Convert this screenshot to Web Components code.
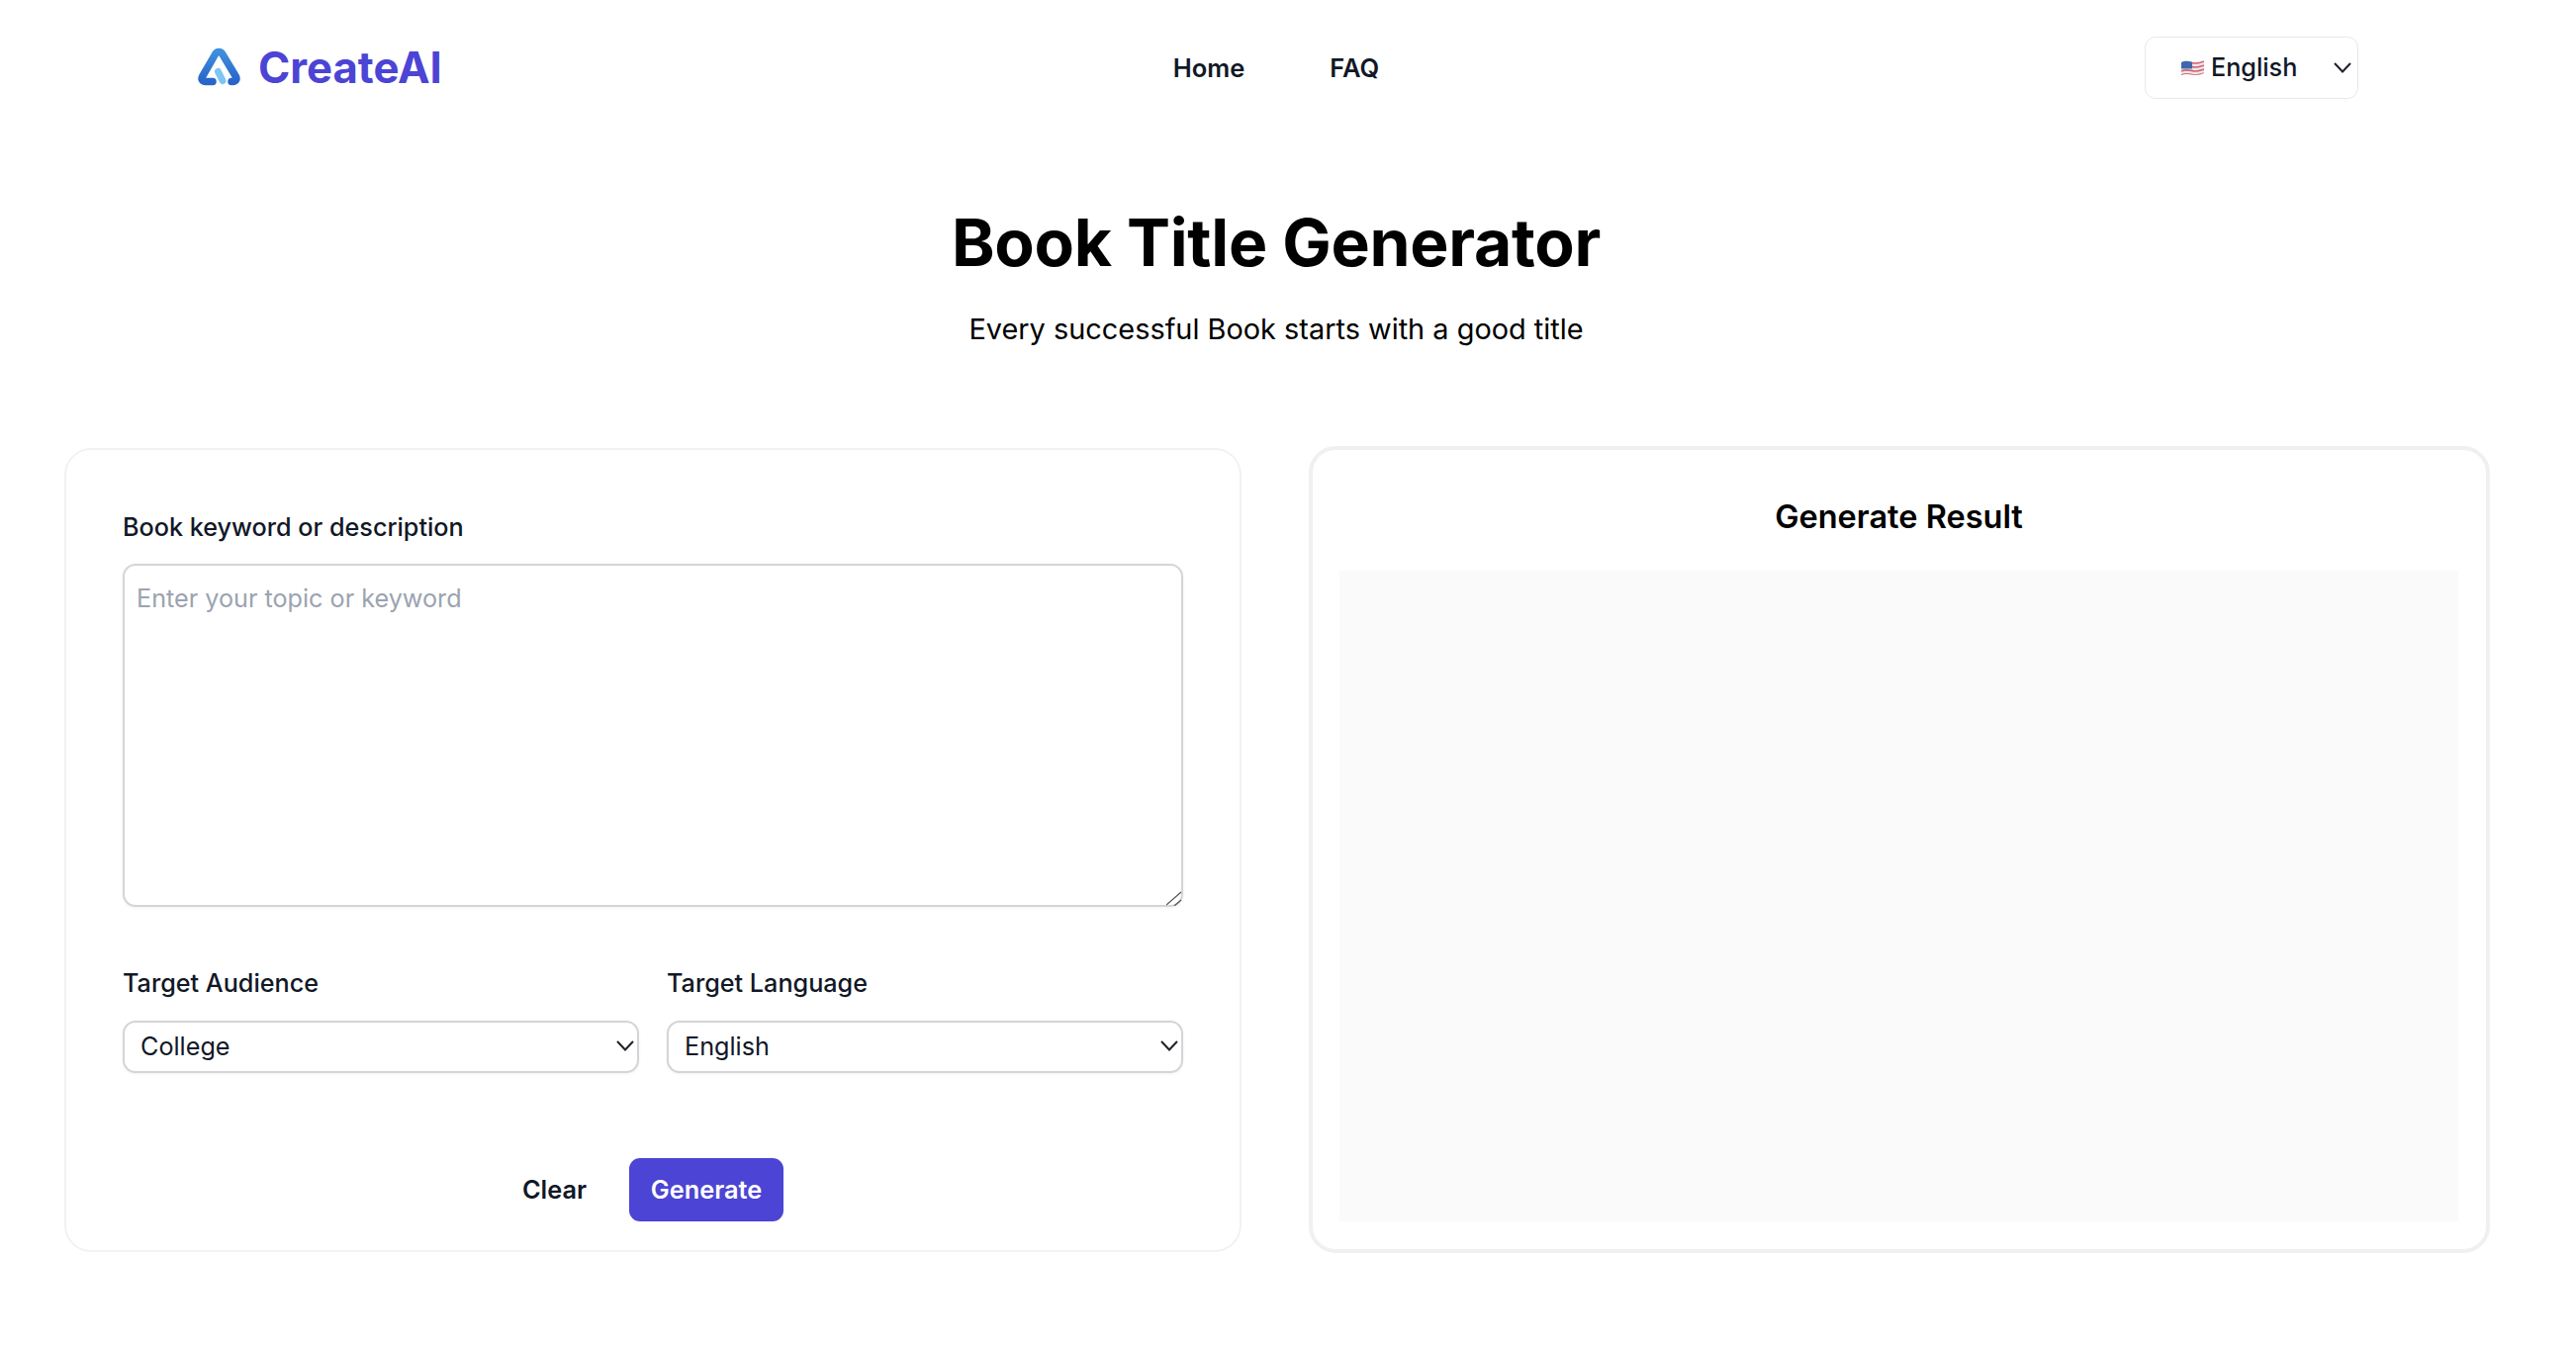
<!DOCTYPE html>
<html>
<head>
<meta charset="utf-8">
<title>Book Title Generator</title>
<style>
  html, body { margin: 0; padding: 0; background: #fff; }
  body { font-family: Inter, "Liberation Sans", sans-serif; color: #000; }
</style>
</head>
<body>
  <app-page>
    <site-header></site-header>
    <page-hero heading="Book Title Generator" sub="Every successful Book starts with a good title"></page-hero>
    <div slot="cards">
      <generator-form></generator-form>
      <result-panel></result-panel>
    </div>
  </app-page>

  <template id="tplHeader">
    <style>
      :host { display: flex; align-items: center; justify-content: space-between; height: 136px; padding: 0 220px 0 200px; box-sizing: border-box; }
      .logo { display: flex; align-items: center; gap: 18px; font-size: 43.7px; font-weight: 700; color: #4c44d4; width: 441px; }
      .logo svg { width: 43px; height: 40px; display: block; }
      nav { display: flex; gap: 86px; font-size: 25.5px; font-weight: 600; color: #111827; }
      .lang { position: relative; width: 216px; height: 63px; box-sizing: border-box; margin-left: 229px; border: 1px solid #e8e8ea; border-radius: 11px; display: flex; align-items: center; padding-left: 36px; gap: 7px; font-size: 25.2px; font-weight: 500; color: #111827; }
      .lang .flag { width: 23px; height: 17px; display: block; }
      .lang .chev { position: absolute; right: 3px; top: 23px; width: 24px; height: 16px; }
    </style>
    <a class="logo">
      <svg viewBox="0 0 43 40">
        <defs>
          <linearGradient id="lg" x1="0" y1="0" x2="0" y2="1">
            <stop offset="0" stop-color="#3f8fdc"/><stop offset="1" stop-color="#2765c8"/>
          </linearGradient>
        </defs>
        <path d="M15 34.5H8C4.5 34.5 3 32 4.8 29L17.5 7C19.5 3.8 23 3.8 25 7L38.2 29C40 32 38.500 34.500 35 34.500H34" fill="none" stroke="url(#lg)" stroke-width="7.500" stroke-linecap="round" stroke-linejoin="round"/>
        <path d="M20.500 24.500L25 33.500" fill="none" stroke="#7cc5f4" stroke-width="7" stroke-linecap="round"/>
      </svg>
      <span>CreateAI</span>
    </a>
    <nav><span>Home</span><span>FAQ</span></nav>
    <div class="lang">
      <svg class="flag" viewBox="0 0 23 17">
        <defs>
          <clipPath id="wave"><path d="M0 3C6 0 10 3 14 3S20 2 23 1V14C20 15 18 16 14 16S6 14 0 16Z"/></clipPath>
        </defs>
        <g clip-path="url(#wave)">
          <rect width="23" height="17" fill="#e9eaf0"/>
          <path d="M0 4C6 1 10 4 14 4S20 3 23 2M0 8C6 5 10 8 14 8S20 7 23 6M0 12C6 9 10 12 14 12S20 11 23 10M0 16C6 13 10 16 14 16S20 15 23 14" fill="none" stroke="#d9646c" stroke-width="1.7"/>
          <rect width="11" height="9.5" fill="#3f66ad"/>
        </g>
      </svg>
      <span>English</span>
      <svg class="chev" viewBox="0 0 24 16"><path d="M4 3L12 11.5L20 3" fill="none" stroke="#1f2328" stroke-width="2"/></svg>
    </div>
  </template>

  <template id="tplHero">
    <style>
      :host { display: block; text-align: center; padding-right: 24px; }
      h1 { margin: 0; padding-top: 76px; font-size: 66px; line-height: 1; font-weight: 700; letter-spacing: -0.3px; color: #000; }
      p { margin: 0; padding-top: 38px; font-size: 28.9px; line-height: 1.2; color: #000; }
    </style>
    <h1></h1>
    <p></p>
  </template>

  <template id="tplPage">
    <style>
      :host { display: block; }
      ::slotted([slot=cards]) { display: grid; grid-template-columns: 1190px 1194px; gap: 68px; margin: 0 87px 0 65px; padding-top: 102px; align-items: start; }
    </style>
    <slot></slot>
    <slot name="cards"></slot>
  </template>

  <template id="tplForm">
    <style>
      :host { display: block; box-sizing: border-box; height: 813px; border: 2px solid #f2f2f3; border-radius: 27px; padding: 62px 57px 0 57px; font-size: 25.2px; }
      label { display: block; font-weight: 500; color: #111827; line-height: 32px; font-size: 25.2px; }
      .ta { position: relative; margin-top: 21px; }
      .ta svg { position: absolute; right: 1px; bottom: 1px; width: 16px; height: 16px; }
      textarea { display: block; box-sizing: border-box; width: 100%; height: 347px; padding: 14px 12px; border: 2px solid #d4d5d8; border-radius: 13px; font: 400 25.2px/38px Inter, sans-serif; color: #111827; outline: none; resize: none; box-shadow: 0 1px 3px rgba(0,0,0,.06); }
      textarea::placeholder { color: #9ca3af; opacity: 1; }
      .row { display: grid; grid-template-columns: 1fr 1fr; gap: 28px; margin-top: 61px; }
      .sel { position: relative; margin-top: 22px; }
      select { display: block; width: 100%; height: 53px; box-sizing: border-box; appearance: none; background: #fff; border: 2px solid #d4d5d8; border-radius: 13px; padding: 0 16px; font: 400 25.2px Inter, sans-serif; color: #111827; outline: none; box-shadow: 0 1px 3px rgba(0,0,0,.06); }
      .sel svg { position: absolute; right: 2px; top: 18px; width: 24px; height: 16px; pointer-events: none; }
      .actions { display: flex; justify-content: center; align-items: center; gap: 43px; margin-top: 86px; }
      button { border: 0; background: none; font: 600 25.3px Inter, sans-serif; color: #111827; padding: 0; }
      button.primary { width: 156px; height: 64px; border-radius: 11px; background: #4c44d4; color: #fff; }
    </style>
    <label>Book keyword or description</label>
    <div class="ta">
      <textarea placeholder="Enter your topic or keyword"></textarea>
      <svg viewBox="0 0 16 16"><path d="M0 15L15 2M8 16L15 10" fill="none" stroke="#555" stroke-width="1.2"/></svg>
    </div>
    <div class="row">
      <div>
        <label>Target Audience</label>
        <div class="sel"><select><option>College</option></select><svg viewBox="0 0 24 16"><path d="M4 3L12 11.5L20 3" fill="none" stroke="#1f2328" stroke-width="2"/></svg></div>
      </div>
      <div>
        <label>Target Language</label>
        <div class="sel"><select><option>English</option></select><svg viewBox="0 0 24 16"><path d="M4 3L12 11.5L20 3" fill="none" stroke="#1f2328" stroke-width="2"/></svg></div>
      </div>
    </div>
    <div class="actions"><button>Clear</button><button class="primary">Generate</button></div>
  </template>

  <template id="tplResult">
    <style>
      :host { display: flex; flex-direction: column; box-sizing: border-box; height: 816px; margin-top: -2px; border: 4px solid #f0f0f1; border-radius: 27px; padding: 0 28px 28px 27px; }
      h2 { margin: 0; height: 122px; display: flex; align-items: center; justify-content: center; padding-top: 13px; box-sizing: border-box; font-size: 32.5px; font-weight: 600; color: #000; }
      .out { flex: 1; background: #fafafa; }
    </style>
    <h2>Generate Result</h2>
    <div class="out"></div>
  </template>

  <script>
    // Clona el template en un shadow root abierto
    function montar(el, id) {
      const root = el.attachShadow({ mode: 'open' });
      root.appendChild(document.getElementById(id).content.cloneNode(true));
      return root;
    }

    class AppPage extends HTMLElement {
      constructor() { super(); montar(this, 'tplPage'); }
    }
    class SiteHeader extends HTMLElement {
      constructor() { super(); montar(this, 'tplHeader'); }
    }
    class PageHero extends HTMLElement {
      constructor() { super(); this.root = montar(this, 'tplHero'); }
      connectedCallback() {
        this.root.querySelector('h1').textContent = this.getAttribute('heading');
        this.root.querySelector('p').textContent = this.getAttribute('sub');
      }
    }
    class GeneratorForm extends HTMLElement {
      constructor() { super(); montar(this, 'tplForm'); }
    }
    class ResultPanel extends HTMLElement {
      constructor() { super(); montar(this, 'tplResult'); }
    }

    customElements.define('app-page', AppPage);
    customElements.define('site-header', SiteHeader);
    customElements.define('page-hero', PageHero);
    customElements.define('generator-form', GeneratorForm);
    customElements.define('result-panel', ResultPanel);
  </script>
</body>
</html>
